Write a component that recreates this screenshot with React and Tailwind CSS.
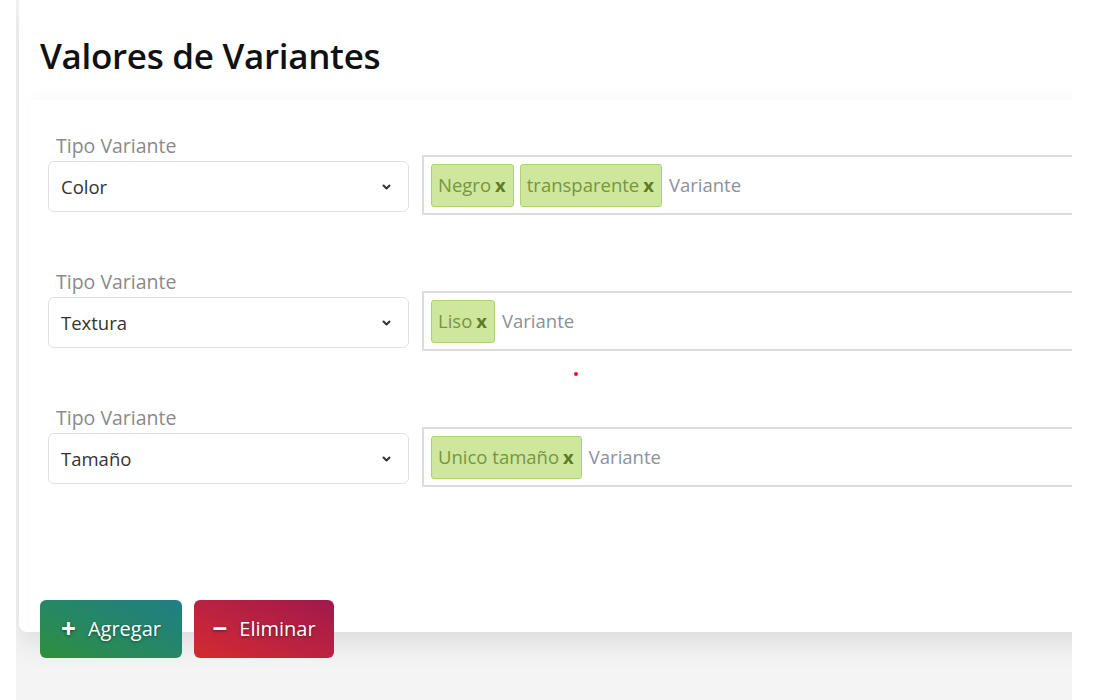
import React from "react";

const Tag = ({ label }) => (
  <span className="flex items-center h-[43px] pl-[6px] pr-[7px] bg-[#cfe69d] border border-[#a9d46f] rounded-[3px] text-[18.5px] text-[#76963f]">
    {label}
    <span className="ml-[4px] font-bold text-[#5c7d28]">x</span>
  </span>
);

const Row = ({ type, tags }) => (
  <div className="flex items-start">
    <div className="flex flex-col w-[361px] shrink-0">
      <div className="pl-[8px] h-[24px] leading-[24px] text-[19.5px] text-[#8a8a8a]">Tipo Variante</div>
      <div className="mt-[3px] h-[51px] border border-[#e0e0e0] rounded-[6px] flex items-center justify-between pl-[12px] pr-[12px] text-[18.5px] text-[#333]">
        <span>{type}</span>
        <svg width="9" height="6" viewBox="0 0 9 6" className="mr-[5px]">
          <path d="M1.5 1.5 L4.5 4.5 L7.5 1.5" stroke="#333" strokeWidth="2" fill="none" strokeLinecap="round" strokeLinejoin="round" />
        </svg>
      </div>
    </div>
    <div className="ml-[13px] mt-[21px] h-[60px] w-[700px] shrink-0 border-2 border-[#dcdcdc] flex items-center gap-[6px] pl-[7px]">
      {tags.map((t) => (
        <Tag key={t} label={t} />
      ))}
      <span className="ml-[1px] text-[18.5px] text-[#8c909a]">Variante</span>
    </div>
  </div>
);

export default function App() {
  return (
    <div className="w-[1113px] h-[700px] bg-white overflow-hidden" style={{ fontFamily: '"Open Sans", "Noto Sans", sans-serif' }}>
      <div className="ml-[16px] w-[1056px] h-[700px] bg-[#f4f4f4] overflow-hidden relative">
        <div className="ml-[3px] w-[1100px] bg-white rounded-bl-[8px] shadow-[0_10px_30px_rgba(0,0,0,0.1)] relative flex flex-col">
          <div className="h-[100px] pl-[21px] pt-[34px]">
            <h1 className="text-[35px] leading-[44px] text-[#111] font-semibold tracking-[-0.3px]">
              Valores de Variantes
            </h1>
          </div>
          <div className="ml-[11px] shadow-[0_-6px_14px_rgba(0,0,0,0.025)] pt-[34px] pl-[18px] flex flex-col">
            <div className="flex flex-col gap-[55px]">
              <Row type="Color" tags={["Negro", "transparente"]} />
              <Row type="Textura" tags={["Liso"]} />
              <Row type="Tamaño" tags={["Unico tamaño"]} />
            </div>
            <div className="flex gap-[12px] mt-[113px] -ml-[8px] -mb-[26px] relative z-10">
              <button className="h-[58px] w-[142px] rounded-[6px] bg-gradient-to-tr from-[#2f8f3a] to-[#217d86] text-white text-[20px] flex items-center justify-center gap-[12px] [text-shadow:0_1px_3px_rgba(0,0,0,0.45)]">
                <span className="text-[26px] font-bold leading-none -mt-[3px]">+</span>
                <span>Agregar</span>
              </button>
              <button className="h-[58px] w-[140px] rounded-[6px] bg-gradient-to-tr from-[#d42a2e] to-[#a1184b] text-white text-[20px] flex items-center justify-center gap-[12px] [text-shadow:0_1px_3px_rgba(0,0,0,0.45)]">
                <span className="text-[26px] font-bold leading-none -mt-[3px]">−</span>
                <span>Eliminar</span>
              </button>
            </div>
          </div>
        </div>
        <div className="absolute left-[558px] top-[372px] w-[4px] h-[4px] rounded-full bg-[#f01010]" />
      </div>
    </div>
  );
}
